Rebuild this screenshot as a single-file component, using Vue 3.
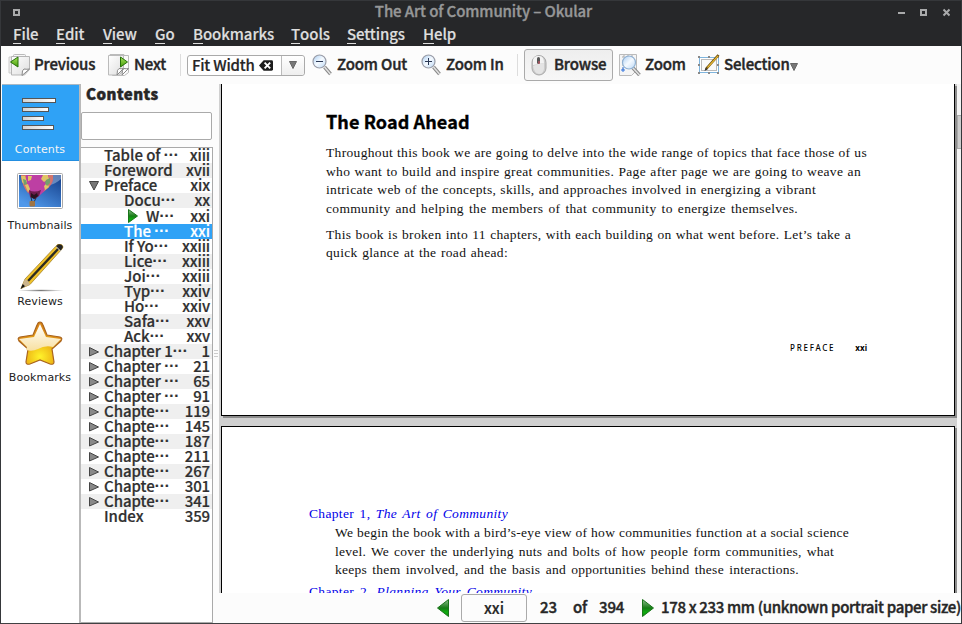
<script setup>
const menus = [
  { label: 'File', w: 43 }, { label: 'Edit', w: 47 }, { label: 'View', w: 52 },
  { label: 'Go', w: 38 }, { label: 'Bookmarks', w: 98 }, { label: 'Tools', w: 56 },
  { label: 'Settings', w: 76 }, { label: 'Help', w: 40 }
]
const toc = [
  { t: 'Table of ', cut: true, p: 'xiii', l: 1 },
  { t: 'Foreword', p: 'xvii', l: 1 },
  { t: 'Preface', p: 'xix', l: 1, open: true },
  { t: 'Docu', cut: true, p: 'xx', l: 2 },
  { t: 'W', cut: true, p: 'xxi', l: 2, current: true },
  { t: 'The ', cut: true, p: 'xxi', l: 2, selected: true },
  { t: 'If Yo', cut: true, p: 'xxiii', l: 2 },
  { t: 'Lice', cut: true, p: 'xxiii', l: 2 },
  { t: 'Joi', cut: true, p: 'xxiii', l: 2 },
  { t: 'Typ', cut: true, p: 'xxiv', l: 2 },
  { t: 'Ho', cut: true, p: 'xxiv', l: 2 },
  { t: 'Safa', cut: true, p: 'xxv', l: 2 },
  { t: 'Ack', cut: true, p: 'xxv', l: 2 },
  { t: 'Chapter 1', cut: true, p: '1', l: 1, closed: true },
  { t: 'Chapter ', cut: true, p: '21', l: 1, closed: true },
  { t: 'Chapter ', cut: true, p: '65', l: 1, closed: true },
  { t: 'Chapter ', cut: true, p: '91', l: 1, closed: true },
  { t: 'Chapte', cut: true, p: '119', l: 1, closed: true },
  { t: 'Chapte', cut: true, p: '145', l: 1, closed: true },
  { t: 'Chapte', cut: true, p: '187', l: 1, closed: true },
  { t: 'Chapte', cut: true, p: '211', l: 1, closed: true },
  { t: 'Chapte', cut: true, p: '267', l: 1, closed: true },
  { t: 'Chapte', cut: true, p: '301', l: 1, closed: true },
  { t: 'Chapte', cut: true, p: '341', l: 1, closed: true },
  { t: 'Index', p: '359', l: 1 }
]
const intro = [
  { t: 'Throughout this book we are going to delve into the wide range of topics that face those of us', w: 541 },
  { t: 'who want to build and inspire great communities. Page after page we are going to weave an', w: 535 },
  { t: 'intricate web of the concepts, skills, and approaches involved in energizing a vibrant', w: 490 },
  { t: 'community and helping the members of that community to energize themselves.', w: 472 }
]
const outline = [
  { t: 'This book is broken into 11 chapters, with each building on what went before. Let’s take a', w: 525 },
  { t: 'quick glance at the road ahead:', w: 182 }
]
const chapter = [
  { t: 'We begin the book with a bird’s-eye view of how communities function at a social science', w: 514 },
  { t: 'level. We cover the underlying nuts and bolts of how people form communities, what', w: 499 },
  { t: 'keeps them involved, and the basis and opportunities behind these interactions.', w: 464 }
]
</script>

<template>
  <div class="window">
    <svg class="defs" width="0" height="0" aria-hidden="true">
      <defs>
        <linearGradient id="lens" x1="0" y1="0" x2="1" y2="1"><stop offset="0" stop-color="#a9cdf2" /><stop offset=".5" stop-color="#f5faff" /><stop offset="1" stop-color="#b9d6f4" /></linearGradient>
        <linearGradient id="green" x1="0" y1="0" x2="0" y2="1"><stop offset="0" stop-color="#8fbd8e" /><stop offset=".5" stop-color="#167b16" /><stop offset=".75" stop-color="#0fae0f" /><stop offset="1" stop-color="#118411" /></linearGradient>
        <linearGradient id="lime" x1="0" y1="0" x2="0" y2="1"><stop offset="0" stop-color="#a6e45b" /><stop offset="1" stop-color="#469d0b" /></linearGradient>
        <linearGradient id="bar" x1="0" x2="1"><stop offset="0" stop-color="#d2d2d2" /><stop offset="1" stop-color="#fff" /></linearGradient>
        <linearGradient id="paper" x1="0" y1="0" x2="1" y2="1"><stop offset="0" stop-color="#fff" /><stop offset="1" stop-color="#dedede" /></linearGradient>
      </defs>
    </svg>
    <header class="titlebar">
      <i class="dot"></i>
      <h1>The Art of Community – Okular</h1>
      <svg class="controls" width="52" height="9" viewBox="0 0 52 9"><path d="M0 5h7" stroke="#a9aaab" stroke-width="2" /><rect x="23" y="2" width="5" height="5" fill="none" stroke="#a9aaab" stroke-width="2" /><path d="M45.500 1.500l6 6M51.500 1.500l-6 6" stroke="#a9aaab" stroke-width="2" /></svg>
    </header>
    <nav class="menubar">
      <span v-for="m in menus" :key="m.label" :style="{ width: m.w + 'px' }"><u>{{ m.label[0] }}</u>{{ m.label.slice(1) }}</span>
    </nav>

    <div class="toolbar">
      <div class="tool">
        <svg width="22" height="22" viewBox="0 0 22 22"><rect x="5.5" y=".5" width="12" height="18" rx="1" fill="#f7f7f7" stroke="#bbb" /><path d="M1 3h3v16H1z" fill="#eee" stroke="#ccc" /><path d="M3.500 2.500h18v13l-5 5.500h-13z" fill="url(#paper)" stroke="#b5b5b5" /><path d="M14 21.500q0-6 2-6.500 3 .5 5.500 0z" fill="#fff" stroke="#888" /><path d="M2.500 8L10 3v10z" fill="url(#lime)" stroke="#28720a" /></svg>
        <b>Previous</b>
      </div>
      <div class="tool">
        <svg width="22" height="22" viewBox="0 0 22 22"><path d="M2 .5h14v16H2z" fill="#eee" stroke="#bbb" /><path d="M4.500 1.500h16v17l-4 3h-12z" fill="#fafafa" stroke="#bbb" /><path d="M.5 1.500h15v14l-4 5.500H.5z" fill="url(#paper)" stroke="#bbb" /><path d="M9 21q0-6 2-6.500 2 .5 4.500 0zM14 21q0-6 2-6.500 2 .5 4.500 0z" fill="#fff" stroke="#888" /><path d="M12.500 3l7 5-7 5z" fill="url(#lime)" stroke="#28720a" /></svg>
        <b>Next</b>
      </div>
      <i class="sep"></i>
      <div class="combo">
        <b>Fit Width</b>
        <svg width="14" height="11" viewBox="0 0 15 11"><path d="M5 0h8.500Q15 0 15 1.500v8Q15 11 13.500 11H5L0 5.500z" fill="#1d1d1d" /><path d="M6 2.500l6 6M12 2.500l-6 6" stroke="#fff" stroke-width="2" /></svg>
        <span class="drop"><svg width="8" height="8" viewBox="0 0 8 8"><path d="M.5.500h7L4 7.500z" fill="#777" stroke="#666" /></svg></span>
      </div>
      <div class="tool zo">
        <svg width="22" height="22" viewBox="0 0 22 22"><path d="M12.500 13l6 7" stroke="#888" stroke-width="3.500" /><path d="M12.500 13l6 7" stroke="#e2e2e2" stroke-width="1.500" /><circle cx="7.500" cy="7.500" r="6.500" fill="url(#lens)" stroke="#9a9da8" stroke-width="1.200" /><path d="M4 7.500h7" stroke="#2b3956" /></svg>
        <b>Zoom Out</b>
      </div>
      <div class="tool zi">
        <svg width="22" height="22" viewBox="0 0 22 22"><path d="M12.500 13l6 7" stroke="#888" stroke-width="3.500" /><path d="M12.500 13l6 7" stroke="#e2e2e2" stroke-width="1.500" /><circle cx="7.500" cy="7.500" r="6.500" fill="url(#lens)" stroke="#9a9da8" stroke-width="1.200" /><path d="M4 7.500h7M7.500 4v7" stroke="#2b3956" /></svg>
        <b>Zoom In</b>
      </div>
      <i class="sep"></i>
      <div class="tool pressed">
        <svg width="22" height="22" viewBox="0 0 22 22"><rect x="4" y="1.500" width="14" height="19.500" rx="7" fill="#ccc" stroke="#aaa" /><path d="M5 11V6q1-4 5-4 6-1 6 7z" fill="#f3f3f3" /><path d="M5 12q6-3 11-3v6q-1 5-5 5-5-1-6-8z" fill="#e4e4e4" /><rect x="9" y="3" width="3" height="7" rx="1.500" fill="#555" /><path d="M11 7v3" stroke="#d56" /></svg>
        <b>Browse</b>
      </div>
      <div class="tool zm">
        <svg width="22" height="22" viewBox="0 0 22 22"><path d="M.5.500h17v16l-5 5H.5z" fill="#f5f5f5" stroke="#bbb" /><path d="M4 2h12M4 2v16" stroke="#aaa" stroke-dasharray="2 2" /><path d="M14 14l6.500 7" stroke="#888" stroke-width="3.500" /><path d="M14 14l6.500 7" stroke="#e2e2e2" stroke-width="1.500" /><circle cx="10" cy="8.500" r="6.500" fill="url(#lens)" stroke="#8fb0d2" stroke-width="1.200" /><path d="M4 13v5M2 16h4" stroke="#2f73df" /></svg>
        <b>Zoom</b>
      </div>
      <div class="tool sel">
        <svg width="22" height="22" viewBox="0 0 22 22"><rect x="1.500" y="3.500" width="19" height="15" fill="#fff" stroke="#7fb5de" /><rect x="3.500" y="5.500" width="15" height="11" fill="#fafafa" stroke="#bbb" /><path d="M0 2h2v2H0zM10 2h2v2h-2zM19 2h2v2h-2zM0 10h2v2H0zM19 10h2v2h-2zM0 18h2v2H0zM10 18h2v2h-2zM19 18h2v2h-2z" fill="#888" /><path d="M8 15L20.500 1" stroke="#6c4f10" stroke-width="2.600" /><path d="M9.500 13.500L20 2" stroke="#e5b733" stroke-width="1.200" /><path d="M6.500 17l1-3 2 1.500z" fill="#333" /></svg>
        <b>Selection</b>
        <svg class="tri" width="8" height="8" viewBox="0 0 8 8"><path d="M.5.500h7L4 7.500z" fill="#777" stroke="#666" /></svg>
      </div>
    </div>

    <main class="body">
      <aside class="tabs">
        <div class="tab active">
          <svg width="48" height="48" viewBox="0 0 48 48"><g fill="url(#bar)" stroke="#555"><rect x="6.500" y="6.500" width="33" height="4" /><rect x="6.500" y="15.500" width="26" height="4" /><rect x="6.500" y="24.500" width="21" height="4" /><rect x="6.500" y="33.500" width="31" height="4" /></g></svg>
          <span>Contents</span>
        </div>
        <div class="tab">
          <svg width="48" height="48" viewBox="0 0 48 48">
            <defs><linearGradient id="sky" x1="1" y1="0" x2=".3" y2="1"><stop offset="0" stop-color="#123b86" /><stop offset="1" stop-color="#4f98ea" /></linearGradient></defs>
            <rect x="1.500" y="5.500" width="45" height="35" rx="1" fill="#fff" stroke="#aaa" /><rect x="3" y="7" width="42" height="32" fill="url(#sky)" />
            <path d="M34 7h11v4q-5 5-14 7z" fill="#bcd0ea" opacity=".45" />
            <path d="M5 7h32q1 8-5 13l-9 8h-8Q6 19 5 7z" fill="#bd3fa3" />
            <path d="M5 7h5q-1 7 4 16l-2 2Q6 18 5 7zM33 7h4q1 8-5 13l-5 4q6-8 6-17z" fill="#d3766c" />
            <path d="M5 8h4l2 6-3 2-2-2zM27 7h5l1 4-5 3-3-3zM9 17l3-1 2 5-2 3zM28 18l3-3 2 4-4 3zM12 8h4l-1 4-3 1z" fill="#e0c566" />
            <path d="M7 11l3 1 1 4-3 1zM30 12l4-2v5l-3 3-2-3z" fill="#73a06c" />
            <path d="M13 22q5 3 12 0l-2 6-4 3-5-2z" fill="#6e1d4e" /><path d="M15 25l3 2 3-2 1 3-4 3-3-2z" fill="#29131f" />
            <path d="M15 29l1 5M20 30l-2 4" stroke="#222" stroke-width=".8" /><rect x="13.500" y="33" width="5.500" height="5.500" rx="1" fill="#a07443" />
          </svg>
          <span>Thumbnails</span>
        </div>
        <div class="tab">
          <svg width="48" height="48" viewBox="0 0 48 48">
            <defs><radialGradient id="shade"><stop offset="0" stop-color="#777" /><stop offset="1" stop-color="#777" stop-opacity="0" /></radialGradient></defs>
            <ellipse cx="25" cy="46.500" rx="23" ry="1.300" fill="url(#shade)" />
            <path d="M5 44.500L9 35 41 1q2-2.500 5 0 2 2 0 4L14 40.500z" fill="#f0c22a" stroke="#9b7720" stroke-width=".7" /><path d="M12 37L42.500 4.500" stroke="#2b2b22" stroke-width="2.400" /><path d="M5 44.500l4-9.500q3.500 1 5 5.500z" fill="#cbb48c" /><path d="M4.500 45l2.300-5 2.200 2.300z" fill="#111" /><path d="M42 .5q4-1 5 2.500l-2.500 4-4.500-4.500z" fill="#242424" /><path d="M40 2.500l4.500 4.500" stroke="#ddd" />
          </svg>
          <span>Reviews</span>
        </div>
        <div class="tab">
          <svg width="48" height="48" viewBox="0 0 48 48">
            <defs><radialGradient id="gold" cx=".5" cy=".82" r=".65"><stop offset="0" stop-color="#fff32b" /><stop offset=".5" stop-color="#eeb615" /><stop offset="1" stop-color="#d98616" /></radialGradient><linearGradient id="gloss" x1="0" y1="0" x2="0" y2="1"><stop offset="0" stop-color="#fff" /><stop offset="1" stop-color="#f8e0a0" /></linearGradient></defs>
            <path d="M24 2q2 0 3 3l4 10 13 2q3 1 1 4l-9 8 2 13q0 3-4 2l-10-4-10 4q-4 1-4-2l2-13-9-8q-2-3 1-4l13-2 4-10q1-3 3-3z" fill="url(#gold)" stroke="#a9641f" stroke-width="1.200" /><path d="M24 4l6 13 15 2-8 8q-8-2-15 2-6 3-12 1l1-3-8-8 15-2z" fill="url(#gloss)" />
          </svg>
          <span>Bookmarks</span>
        </div>
      </aside>

      <section class="panel">
        <h2>Contents</h2>
        <div class="search"></div>
        <div class="tree">
          <div v-for="(r, i) in toc" :key="i" class="row" :class="{ odd: i % 2, selected: r.selected, current: r.current, sub: r.l === 2 }">
            <span class="arrow">
              <svg v-if="r.open" width="10" height="10" viewBox="0 0 10 10"><path d="M.5.500h9L5 9z" fill="#777" stroke="#444" /></svg>
              <svg v-if="r.closed" width="10" height="10" viewBox="0 0 10 10"><path d="M.5.500L9.500 5 .5 9z" fill="#888" stroke="#444" /></svg>
            </span>
            <svg v-if="r.current" class="play" width="10" height="14" viewBox="0 0 10 14"><path d="M.5.500L9.500 7 .5 13.500z" fill="url(#green)" stroke="#197419" /></svg>
            <span class="name">{{ r.t }}</span><span v-if="r.cut" class="dots">···</span><span class="num">{{ r.p }}</span>
          </div>
        </div>
      </section>

      <div class="splitter"><i></i><i></i><i></i></div>

      <section class="right">
        <div class="view">
          <div class="canvas">
            <article class="page first">
              <h3>The Road Ahead</h3>
              <p v-for="l in intro" :key="l.t" :style="{ width: l.w + 'px' }">{{ l.t }}</p>
              <div class="gap"></div>
              <p v-for="l in outline" :key="l.t" :style="{ width: l.w + 'px' }">{{ l.t }}</p>
              <footer><span>PREFACE</span><b>xxi</b></footer>
            </article>
            <article class="page second">
              <p class="link">Chapter 1, <em>The Art of Community</em></p>
              <div class="indent"><p v-for="l in chapter" :key="l.t" :style="{ width: l.w + 'px' }">{{ l.t }}</p></div>
              <p class="link next">Chapter 2, <em>Planning Your Community</em></p>
            </article>
          </div>
          <div class="scroll"><i></i></div>
        </div>
        <div class="status">
          <svg width="12" height="18" viewBox="0 0 12 18"><path d="M11.500.500v17L.5 9z" fill="url(#green)" stroke="#197419" /></svg>
          <span class="field">xxi</span>
          <b class="n">23</b><b class="of">of</b><b class="total">394</b>
          <svg width="12" height="18" viewBox="0 0 12 18"><path d="M.5.500v17L11.500 9z" fill="url(#green)" stroke="#197419" /></svg>
          <b class="size">178 x 233 mm (unknown portrait paper size)</b>
        </div>
      </section>
    </main>
  </div>
</template>

<style>
body { background: #fcfcfc; }
</style>

<style scoped>
* { box-sizing: border-box; }
h1, h2, h3, p { margin: 0; }
svg { display: block; flex: none; }
.defs { position: absolute; }
.window { width: 962px; height: 624px; display: flex; flex-direction: column; overflow: hidden; background: #fcfcfc; border: 1px solid #35373a; border-bottom-color: #414143; font-family: 'Noto Sans CJK SC', sans-serif; font-size: 15px; font-weight: 500; color: #262626; -webkit-text-stroke: .2px; }
.titlebar { height: 22px; flex: none; display: flex; align-items: center; background: #262729; padding: 0 11px 0 12px; }
.dot { width: 7px; height: 7px; border: 2px solid #a9aaab; background: #262729; }
.titlebar h1 { flex: 1; padding: 0 0 2px 49px; text-align: center; font-size: 15px; font-weight: 500; line-height: 20px; color: #969798; letter-spacing: -.1px; -webkit-text-stroke: .35px; }
.menubar { height: 23px; flex: none; display: flex; background: #262729; color: #dedede; padding-left: 12px; line-height: 21px; letter-spacing: -.08px; }
.menubar span { flex: none; white-space: nowrap; }
.menubar u { display: inline-block; height: 21px; text-decoration: none; border-bottom: 1px solid #dedede; }
.toolbar { height: 38px; flex: none; display: grid; grid-template-columns: 100px 72px 7px 125px 109px 96px 7px 95px 79px 102px; align-items: center; padding-left: 7px; }
.toolbar b, .status b { font-weight: 500; -webkit-text-stroke: .4px; white-space: nowrap; line-height: 20px; padding-bottom: 2px; letter-spacing: -.15px; }
.tool { display: flex; align-items: center; gap: 4px; }
.zo, .zi { gap: 3px; }
.sep { width: 1px; height: 22px; background: #ddd; }
.combo { width: 118px; height: 21px; border: 1px solid #aaa; border-radius: 3px; background: #fff; display: flex; align-items: center; padding-left: 4px; gap: 4px; }
.toolbar .combo b { letter-spacing: -.22px; -webkit-text-stroke: .2px; padding-bottom: 0; }
.drop { margin-left: auto; width: 23px; height: 19px; border-left: 1px solid #bbb; background: linear-gradient(#fff, #eee); border-radius: 0 3px 3px 0; display: grid; place-items: center; }
.pressed { width: 89px; height: 32px; border: 1px solid #aaa; border-radius: 3px; background: linear-gradient(#eee, #f7f7f7); padding-left: 3px; }
.tri { margin: 4px 0 0 -4px; }
.body { flex: 1; min-height: 0; display: flex; }
.tabs { width: 78px; flex: none; border-left: 1px solid #fff; background: #fff; -webkit-text-stroke: 0; }
.tab { height: 76px; display: flex; flex-direction: column; align-items: center; padding: 7px 1px 0 0; font: 11px/14px 'DejaVu Sans', sans-serif; color: #222; gap: 3px; letter-spacing: .1px; }
.tab.active { background: #2fa2f6; color: #f5f5f5; border-top: 1px solid #a9b8c4; border-bottom: 1px solid #238ee0; height: 77px; padding-right: 1px; }
.panel { width: 134px; flex: none; display: flex; flex-direction: column; border-left: 2px solid #b9b9b9; }
.panel h2 { font: 900 15px/20px 'Noto Sans CJK SC', sans-serif; letter-spacing: .5px; padding-left: 5px; height: 28px; -webkit-text-stroke: .5px; }
.search { height: 28px; flex: none; border: 1px solid #aaa; border-radius: 2px; background: #fff; margin-right: 1px; }
.tree { margin-top: 7px; flex: 1; min-height: 0; background: #fff; border: 1px solid #aaa; border-left: 0; overflow: hidden; color: #303030; }
.row { height: 15px; display: flex; align-items: center; line-height: 13px; padding-right: 2px; white-space: nowrap; letter-spacing: -.03px; }
.name, .num, .dots { padding-bottom: 2px; white-space: pre; }
.dots { font-family: 'Liberation Sans', sans-serif; font-weight: 700; letter-spacing: 0; }
.row.odd { background: #efefef; }
.row.current { height: 16px; }
.row.selected { background: #2fa2f6; color: #fff; }
.arrow { width: 23px; flex: none; padding-left: 8px; }
.sub .arrow { width: 43px; }
.play { margin: 0 8px 0 4px; }
.num { margin-left: auto; letter-spacing: -.15px; }
.splitter { width: 6px; flex: none; display: flex; flex-direction: column; justify-content: center; align-items: center; gap: 2px; }
.splitter i { width: 4px; height: 1px; background: #ccc; }
.right { flex: 1; min-width: 0; display: flex; flex-direction: column; }
.view { height: 509px; flex: none; display: flex; overflow: hidden; }
.canvas { width: 738px; flex: none; background: #d0d0d0; padding-left: 2px; display: flex; flex-direction: column; gap: 10px; -webkit-text-stroke: 0; }
.page { width: 734px; flex: none; background: #fff; border: 1px solid #000; box-shadow: 2px 2px 0 #8c8c8c; color: #111; font-family: 'Liberation Serif', serif; font-size: 13.5px; font-weight: 400; }
.page p { height: 18.6px; line-height: 18.6px; white-space: nowrap; letter-spacing: .33px; text-align-last: justify; }
.first { height: 332px; border-top: 0; padding: 24px 0 0 104px; }
.first h3 { font: 700 18px/26px 'Noto Sans CJK SC', sans-serif; color: #000; margin-bottom: 10px; letter-spacing: .1px; -webkit-text-stroke: .35px; }
.gap { height: 7.500px; }
.first footer { display: flex; font: 500 8px/10px 'Noto Sans', sans-serif; letter-spacing: 1.75px; padding: 80px 0 0 464px; gap: 20px; color: #000; }
.first footer b { letter-spacing: .1px; }
.second { height: 300px; padding: 77.500px 0 0 87px; }
.page .link { color: #0000e8; width: 199px; height: 19.500px; letter-spacing: .33px; }
.page .link.next { width: 223px; padding-top: 3px; }
.indent { padding-left: 26px; }
.page .indent p { letter-spacing: .27px; }
.scroll { width: 4px; background: #f4f4f4; padding-top: 31px; }
.scroll i { display: block; height: 34px; background: #ccc; border: 1px solid #aaa; border-right: 0; }
.status { flex: 1; display: flex; align-items: center; padding-left: 218px; }
.status b { flex: none; }
.field { width: 66px; height: 28px; border: 1px solid #aaa; border-radius: 3px; margin-left: 12px; text-align: center; line-height: 26px; flex: none; }
.n { margin-left: 13px; width: 33px; }
.of { width: 26px; }
.total { width: 43px; }
.status .size { margin-left: 7px; letter-spacing: -.33px; }
</style>
